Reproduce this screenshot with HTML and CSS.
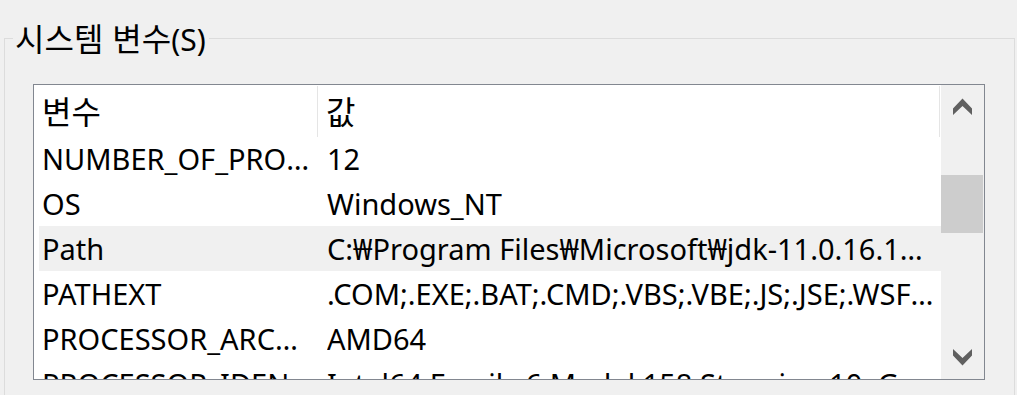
FILE: index.html
```html
<!DOCTYPE html>
<html lang="ko">
<head>
<meta charset="utf-8">
<link rel="stylesheet" href="styles.css">
</head>
<body>
<div class="group">
  <div class="group-title"><span class="ko">시스템 변수</span>(S)</div>
  <div class="listbox">
    <div class="list">
      <div class="header">
        <div class="hcell c1"><span class="ko">변수</span></div>
        <div class="hcell c2"><span class="ko">값</span></div>
      </div>
      <div class="rows">
        <div class="row"><div class="cell c1">NUMBER_OF_PROCESSORS</div><div class="cell c2">12</div></div>
        <div class="row"><div class="cell c1">OS</div><div class="cell c2">Windows_NT</div></div>
        <div class="row hover"><div class="cell c1">Path</div><div class="cell c2">C:₩Program Files₩Microsoft₩jdk-11.0.16.101-hotspot₩bin;C:₩Windows₩system32</div></div>
        <div class="row"><div class="cell c1">PATHEXT</div><div class="cell c2">.COM;.EXE;.BAT;.CMD;.VBS;.VBE;.JS;.JSE;.WSF;.WSH;.MSC</div></div>
        <div class="row"><div class="cell c1">PROCESSOR_ARCHITECTURE</div><div class="cell c2">AMD64</div></div>
        <div class="row"><div class="cell c1">PROCESSOR_IDENTIFIER</div><div class="cell c2">Intel64 Family 6 Model 158 Stepping 10, GenuineIntel</div></div>
      </div>
    </div>
    <div class="scrollbar">
      <div class="sb-btn">
        <svg width="19" height="17" viewBox="0 0 19 17"><path d="M0 10.5 L9.5 0.5 L19 10.5 L19 17 L9.5 8 L0 17 Z" fill="#606060"/></svg>
      </div>
      <div class="sb-track">
        <div class="sb-gap-top"></div>
        <div class="sb-thumb"></div>
      </div>
      <div class="sb-btn">
        <svg width="19" height="17" viewBox="0 0 19 17"><path d="M0 0 L9.5 9 L19 0 L19 6.5 L9.5 16.5 L0 6.5 Z" fill="#606060"/></svg>
      </div>
    </div>
  </div>
</div>
</body>
</html>
```
FILE: styles.css
```css
html, body {
  margin: 0;
  padding: 0;
  background: #f0f0f0;
  width: 1017px;
  height: 395px;
  overflow: hidden;
  font-family: "Noto Sans", "Noto Sans CJK KR", sans-serif;
  font-size: 29px;
  color: #000;
}
.ko {
  font-family: "Noto Sans CJK KR", sans-serif;
  font-size: 32px;
}
.group {
  position: relative;
  box-sizing: border-box;
  margin: 38px 2px 0 4px;
  border: 1px solid #dcdcdc;
  border-bottom: none;
  height: 357px;
  padding: 45px 29px 0 28px;
}
.group-title {
  position: absolute;
  left: 8px;
  top: -25px;
  padding: 0 3px 0 2px;
  background: #f0f0f0;
  line-height: 46px;
  font-size: 30px;
}
.listbox {
  display: flex;
  width: 950px;
  height: 294px;
  border: 1px solid #828790;
  background: #fff;
}
.list {
  flex: 1;
  display: flex;
  flex-direction: column;
  overflow: hidden;
}
.header {
  display: flex;
  height: 51px;
  flex: none;
}
.hcell {
  line-height: 48px;
  border-right: 1px solid #e5e5e5;
  height: 51px;
  box-sizing: border-box;
  margin-top: 1px;
}
.header .c1 {
  width: 284px;
  padding-left: 8px;
}
.header .c2 {
  width: 622px;
  padding-left: 8px;
}
.rows {
  padding-left: 5px;
}
.row {
  display: flex;
  height: 45px;
  line-height: 45px;
}
.row.hover {
  background: #f0f0f0;
}
.cell {
  white-space: nowrap;
  overflow: hidden;
  text-overflow: ellipsis;
  box-sizing: border-box;
}
.row .c1 {
  width: 288px;
  padding: 0 8px 0 3px;
}
.row .c2 {
  width: 613px;
  padding: 0 4px 0 0;
}
.scrollbar {
  width: 43px;
  flex: none;
  background: #f0f0f0;
  display: flex;
  flex-direction: column;
}
.sb-btn {
  height: 43px;
  display: flex;
  align-items: center;
  justify-content: center;
  flex: none;
}
.sb-track {
  flex: 1;
  display: flex;
  flex-direction: column;
}
.sb-gap-top {
  height: 47px;
}
.sb-thumb {
  height: 58px;
  width: 42px;
  background: #cdcdcd;
}
```
